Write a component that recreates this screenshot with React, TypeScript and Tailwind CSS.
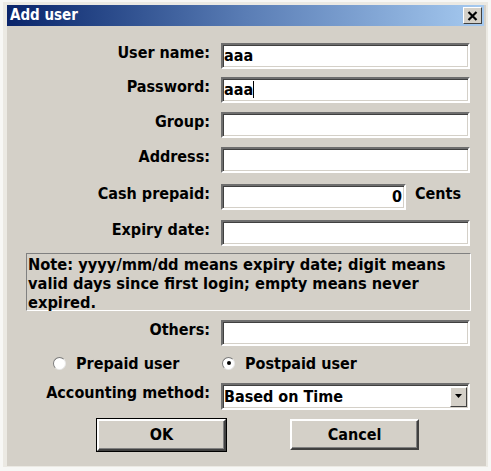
import { useState } from 'react';

const font = "font-['DejaVu_Sans_Condensed','DejaVu_Sans',sans-serif] font-bold";

// classic sunken field edge
const sunken =
  'border-2 border-t-[#6e6e6e] border-l-[#6e6e6e] border-b-white border-r-white shadow-[inset_1px_1px_0_#404040,inset_-1px_-1px_0_#d4d0c8]';

function Row({ label, children, className = '' }: { label: string; children: React.ReactNode; className?: string }) {
  return (
    <div className={`flex items-start ${className}`}>
      <div className="w-[203px] text-right text-[16px] leading-[19px] text-black">{label}</div>
      <div className="ml-[11px]">{children}</div>
    </div>
  );
}

function Field({ value = '', w = 249, caret = false, right = false }: { value?: string; w?: number; caret?: boolean; right?: boolean }) {
  return (
    <div
      className={`${sunken} bg-white h-[26px] flex items-end pb-[2px] px-[1px] text-[16px] leading-[19px] text-black ${right ? 'justify-end pr-[2px]' : ''}`}
      style={{ width: w }}
    >
      <span>{value}</span>
      {caret && <span className="inline-block w-[1px] h-[17px] bg-black mb-[1px]" />}
    </div>
  );
}

function Radio({ checked }: { checked: boolean }) {
  return (
    <span className="relative inline-block w-[13px] h-[13px] rounded-full bg-white border border-t-[#7a7a7a] border-l-[#7a7a7a] border-b-[#e8e8e8] border-r-[#e8e8e8]">
      {checked && <span className="absolute left-[3.5px] top-[3.5px] w-[4px] h-[4px] rounded-full bg-black" />}
    </span>
  );
}

function Btn({ label, isDefault = false }: { label: string; isDefault?: boolean }) {
  return (
    <button
      className={`w-[129px] h-[31px] bg-[#d4d0c8] text-[16px] text-black border-2 border-t-white border-l-white border-b-[#404040] border-r-[#404040] shadow-[inset_-1px_-1px_0_#808080] ${
        isDefault ? 'outline outline-1 outline-black h-[32px]' : ''
      }`}
    >
      {label}
    </button>
  );
}

export default function App() {
  const [prepaid, setPrepaid] = useState(false);

  return (
    <div className={`w-[491px] h-[471px] bg-[#f7f7f5] pl-[3px] pt-[2px] ${font}`}>
      <div className="w-[485px] h-[465px] border-l-[4px] border-t-[3px] border-r-[2px] border-b-[1px] border-[#ebe9e3] bg-[#d4d0c8] flex flex-col">
        {/* Title bar */}
        <div className="h-[21px] mr-[2px] flex items-center justify-between pl-[3px] pr-[2px] bg-gradient-to-r from-[#0a246a] via-[#5a7db5] to-[#a6caf0]">
          <span className="text-white text-[15px] leading-none">Add user</span>
          <div className="w-[19px] h-[17px] bg-[#d4d0c8] border border-t-white border-l-white border-b-[#404040] border-r-[#404040] flex items-center justify-center">
            <svg width="11" height="10" viewBox="0 0 11 10">
              <path d="M1.5 1 L9.5 9 M9.5 1 L1.5 9" stroke="black" strokeWidth="2.2" />
            </svg>
          </div>
        </div>

        {/* Body */}
        <div className="flex flex-col">
          <Row label="User name:" className="mt-[17px]">
            <Field value="aaa" />
          </Row>
          <Row label="Password:" className="mt-[8px]">
            <Field value="aaa" caret />
          </Row>
          <Row label="Group:" className="mt-[9px]">
            <Field />
          </Row>
          <Row label="Address:" className="mt-[9px]">
            <Field />
          </Row>
          <Row label="Cash prepaid:" className="mt-[11px]">
            <div className="flex items-start">
              <Field value="0" w={185} right />
              <span className="ml-[9px] text-[16px] leading-[19px]">Cents</span>
            </div>
          </Row>
          <Row label="Expiry date:" className="mt-[10px]">
            <Field />
          </Row>

          <div className="ml-[19px] mt-[7px] w-[445px] h-[58px] border border-t-[#808080] border-l-[#808080] border-b-white border-r-white px-[1px] pt-[1px] text-[16.3px] leading-[19px] text-black">
            Note: yyyy/mm/dd means expiry date; digit means valid days since first login; empty means never expired.
          </div>

          <Row label="Others:" className="mt-[9px]">
            <Field />
          </Row>

          <div className="flex items-center h-[18px] mt-[8px] text-[16px] leading-[19px]">
            <button className="flex items-center ml-[46px] w-[169px]" onClick={() => setPrepaid(true)}>
              <Radio checked={prepaid} />
              <span className="ml-[10px]">Prepaid user</span>
            </button>
            <button className="flex items-center" onClick={() => setPrepaid(false)}>
              <Radio checked={!prepaid} />
              <span className="ml-[10px]">Postpaid user</span>
            </button>
          </div>

          <Row label="Accounting method:" className="mt-[11px]">
            <div className={`${sunken} bg-white w-[249px] h-[27px] flex items-center justify-between pl-[1px] pr-[1px] text-[16px]`}>
              <span>Based on Time</span>
              <div className="w-[17px] h-[20px] bg-[#d4d0c8] border border-t-white border-l-white border-b-[#404040] border-r-[#404040] flex items-center justify-center">
                <svg width="8" height="5" viewBox="0 0 8 5">
                  <path d="M0 0 H7 L3.5 4 Z" fill="black" />
                </svg>
              </div>
            </div>
          </Row>

          <div className="flex mt-[9px] ml-[90px] gap-[64px]">
            <Btn label="OK" isDefault />
            <Btn label="Cancel" />
          </div>
        </div>
      </div>
    </div>
  );
}
